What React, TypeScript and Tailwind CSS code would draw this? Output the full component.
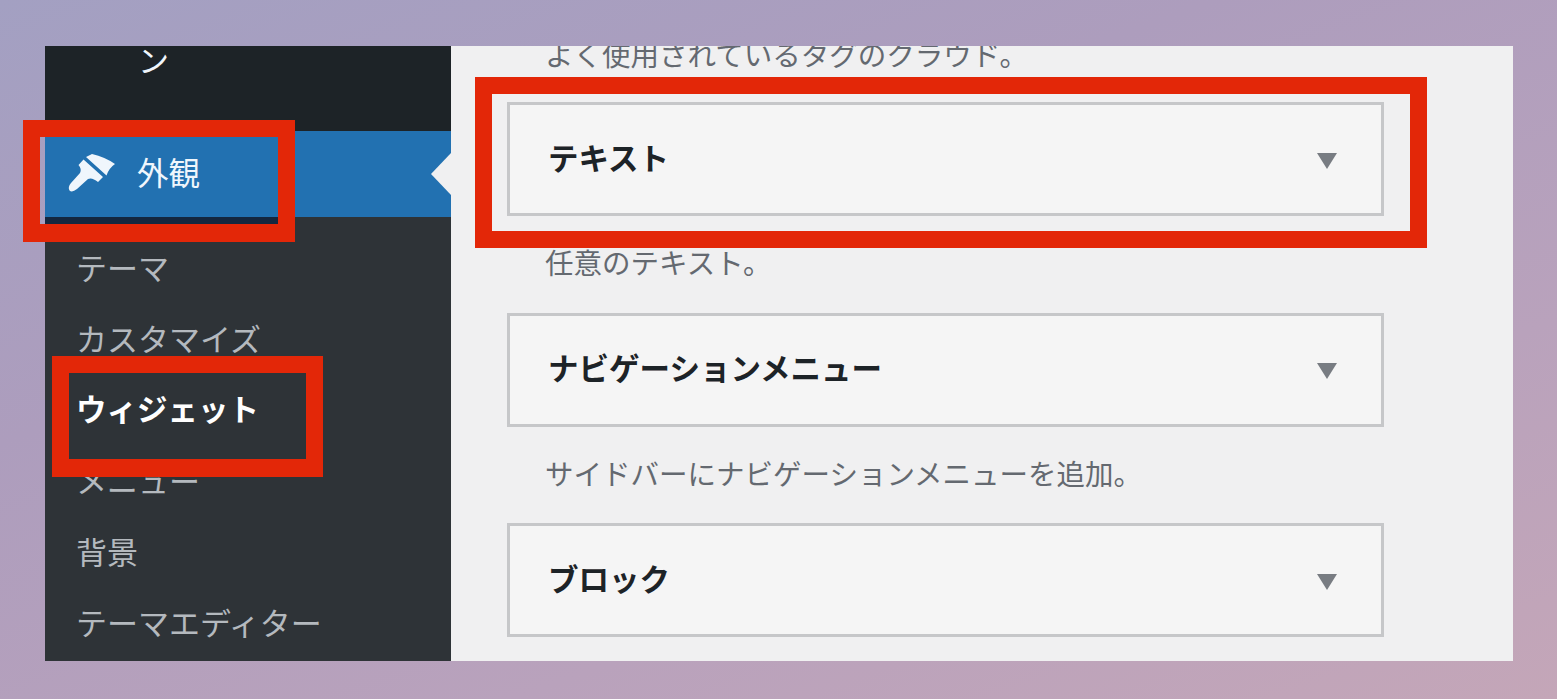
const FONT = "font-['Noto_Sans_CJK_JP','Noto_Sans_CJK_SC',sans-serif]";

const SUBMENU = [
  { label: "テーマ" },
  { label: "カスタマイズ" },
  { label: "ウィジェット", current: true },
  { label: "メニュー" },
  { label: "背景" },
  { label: "テーマエディター" },
];

const WIDGETS = [
  { title: "テキスト", desc: "任意のテキスト。" },
  { title: "ナビゲーションメニュー", desc: "サイドバーにナビゲーションメニューを追加。" },
  { title: "ブロック", desc: "" },
];

function BrushIcon() {
  return (
    <svg width="48" height="40" viewBox="0 0 48 40" fill="#f0f6fc" className="shrink-0">
      <path d="M19 3L25 0Q38 3 48 10Q42 14 39.5 21.5Z" />
      <path d="M16.5 5.5L36 23L31 28Q25 23 21 25L10 35Q5 39 2.5 36.5Q0.5 33 4 29L13 19Q15 15 11.5 11Z" />
    </svg>
  );
}

function Caret() {
  return (
    <svg width="20" height="16" viewBox="0 0 20 16" fill="#787c82" className="mt-[3px] shrink-0">
      <path d="M0 0H20L10 16Z" />
    </svg>
  );
}

function Sidebar() {
  return (
    <aside className="flex w-[406px] shrink-0 flex-col bg-[#2e3337]">
      <div className="h-[85px] overflow-hidden bg-[#1d2327] pl-[93px] text-[31px] leading-[31px] text-[#f0f6fc]">
        <div className="-mt-[3px]">ン</div>
      </div>
      <div className="relative flex h-[86px] items-center bg-[#2271b1] pl-[22px]">
        <BrushIcon />
        <span className="ml-[22px] pb-[4px] text-[31.5px] leading-none text-[#f0f6fc]">外観</span>
        <div className="absolute right-0 top-[22px] h-0 w-0 border-y-[21px] border-r-[20px] border-y-transparent border-r-[#f0f0f1]" />
      </div>
      <ul className="pt-[14px]">
        {SUBMENU.map((item) => (
          <li
            key={item.label}
            className={`flex h-[71px] items-center pl-[31px] leading-none ${
              item.current ? "text-[30.5px] font-bold text-white" : "text-[31px] text-[#b4b9be]"
            }`}
          >
            {item.label}
          </li>
        ))}
      </ul>
    </aside>
  );
}

function WidgetList() {
  return (
    <main className="min-w-0 flex-1 overflow-hidden bg-[#f0f0f1] pl-[56px]">
      <p className="-mt-[16px] mb-[25px] h-[47px] pl-[38px] text-[28.5px] leading-[47px] text-[#646970]">
        よく使用されているタグのクラウド。
      </p>
      {WIDGETS.map((w) => (
        <div key={w.title} className="h-[210.5px]">
          <div className="flex h-[114px] w-[877px] items-center justify-between border-[3px] border-[#c6c7c9] bg-[#f5f5f5] pl-[38px] pr-[44px]">
            <h3 className="pb-[4px] text-[30.5px] font-bold leading-none text-[#1d2327]">{w.title}</h3>
            <Caret />
          </div>
          {w.desc && (
            <p className="pl-[38px] pt-[26px] text-[28.5px] leading-[40px] text-[#646970]">{w.desc}</p>
          )}
        </div>
      ))}
    </main>
  );
}

export default function App() {
  return (
    <div
      className={`relative h-[699px] w-[1557px] overflow-hidden bg-[linear-gradient(160deg,#a3a0c2_0%,#ad9dbd_35%,#b9a2bc_70%,#c4a6b8_100%)] pl-[45px] pt-[46px] ${FONT}`}
    >
      <div className="flex h-[615px] w-[1468px] overflow-hidden">
        <Sidebar />
        <WidgetList />
      </div>

      {/* red callouts drawn on top of the screenshot */}
      <div className="absolute left-[23px] top-[120px] h-[122px] w-[272px] border-x-[17px] border-b-[18px] border-t-[17px] border-[#e32708]">
        <div className="absolute bottom-0 left-[5px] right-0 h-[7px] bg-[#14273f]" />
      </div>
      <div className="absolute left-[52px] top-[356px] h-[121px] w-[271px] border-x-[17px] border-b-[18px] border-t-[17px] border-[#e32708]" />
      <div className="absolute left-[475px] top-[77px] h-[171px] w-[952px] border-[17px] border-[#e32708]" />
    </div>
  );
}
